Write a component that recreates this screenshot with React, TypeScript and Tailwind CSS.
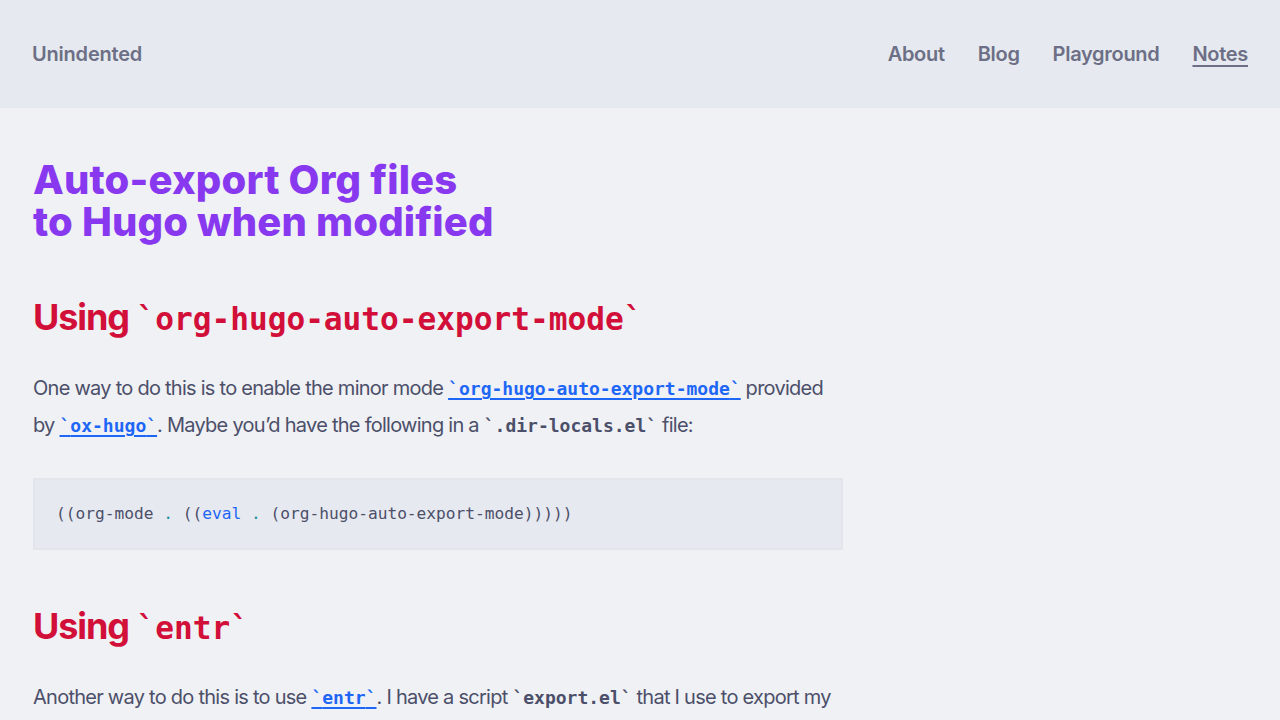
import React from "react";

const mono = "font-['DejaVu_Sans_Mono',monospace]";

function Code({ children, link }: { children: React.ReactNode; link?: boolean }) {
  const text = <code className={`${mono} font-bold text-[0.9em] tracking-normal`}>`{children}`</code>;
  if (link) {
    return (
      <a href="#" className="text-[#1e66f5] underline underline-offset-[3px] decoration-2">
        {text}
      </a>
    );
  }
  return text;
}

export default function App() {
  return (
    <div className="min-h-screen bg-[#eff1f5] text-[#4c4f69] font-['Inter',sans-serif]">
      {/* Header */}
      <header className="h-[108px] bg-[#e6e9ef] px-8 flex items-center justify-between">
        <a href="#" className="text-[20px] font-semibold tracking-[-0.01em] text-[#6c6f85]">Unindented</a>
        <nav className="flex items-center gap-[33px] text-[20px] font-semibold tracking-[-0.015em] text-[#6c6f85]">
          <a href="#">About</a>
          <a href="#">Blog</a>
          <a href="#">Playground</a>
          <a href="#" className="underline underline-offset-[4px] decoration-2">Notes</a>
        </nav>
      </header>

      {/* Article */}
      <main className="px-[33px] pt-[51px] max-w-[876px]">
        <h1 className="text-[40px] leading-[42px] font-extrabold tracking-[0.004em] text-[#8839ef]">
          Auto-export Org files
          <br />
          to Hugo when modified
        </h1>

        <h2 className="mt-[53px] text-[36px] leading-[43px] font-bold tracking-[-0.03em] text-[#d20f39]">
          Using <code className={`${mono} font-bold text-[0.865em] tracking-normal`}>`org-hugo-auto-export-mode`</code>
        </h2>

        <p className="mt-[29px] text-[20px] leading-[37px] tracking-[-0.037em]">
          One way to do this is to enable the minor mode <Code link>org-hugo-auto-export-mode</Code> provided
          by <Code link>ox-hugo</Code>. Maybe you’d have the following in a <Code>.dir-locals.el</Code> file:
        </p>

        <pre className={`${mono} mt-[34px] bg-[#e6e9ef] border-2 border-[#e2e5ec] px-[21px] py-[22px] text-[16.2px] leading-[24px] text-[#4c4f69]`}>
          ((org-mode <span className="text-[#179299]">.</span> ((<span className="text-[#1e66f5]">eval</span>{" "}
          <span className="text-[#179299]">.</span> (org-hugo-auto-export-mode)))))
        </pre>

        <h2 className="mt-[55px] text-[36px] leading-[43px] font-bold tracking-[-0.03em] text-[#d20f39]">
          Using <code className={`${mono} font-bold text-[0.865em] tracking-normal`}>`entr`</code>
        </h2>

        <p className="mt-[29px] text-[20px] leading-[37px] tracking-[-0.037em]">
          Another way to do this is to use <Code link>entr</Code>. I have a script <Code>export.el</Code> that I use to export my
          notes from Org to Hugo, and I run it whenever a file changes.
        </p>
      </main>
    </div>
  );
}
